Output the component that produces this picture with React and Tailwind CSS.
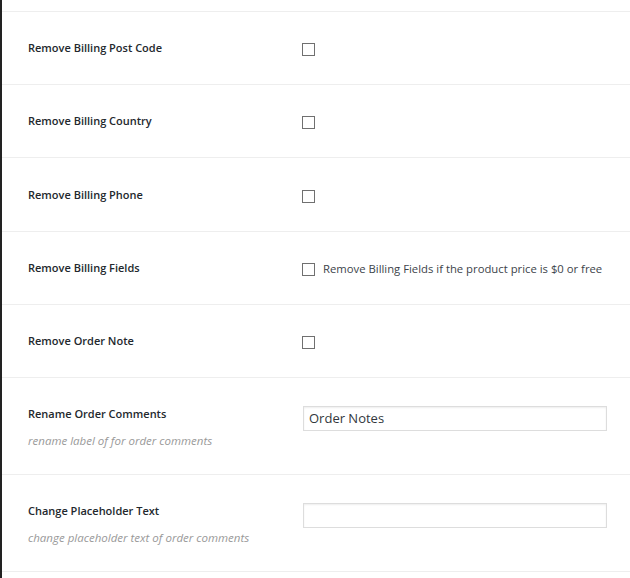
import React from "react";

const font = { fontFamily: '"Open Sans", "Noto Sans", sans-serif' };

function Checkbox() {
  return <div className="w-[13px] h-[13px] border border-[#707070] bg-white shrink-0 mt-[3px]" />;
}

function CheckRow({ label, text, h = "h-[73px]" }) {
  return (
    <div className={"flex items-center border-b border-[#eeeeee] " + h}>
      <div className="w-[300px] pl-[26px] text-[11px] font-semibold text-[#23282d] leading-[18px]">
        {label}
      </div>
      <div className="flex items-center">
        <Checkbox />
        {text && (
          <span className="ml-[8px] text-[11.3px] text-[#3c434a] leading-[18px] mt-[1px]">{text}</span>
        )}
      </div>
    </div>
  );
}

function InputRow({ label, desc, value, ptL }) {
  return (
    <div className="flex h-[97px] border-b border-[#eeeeee]">
      <div className={"w-[301px] pl-[26px] " + ptL}>
        <div className="text-[11px] font-semibold text-[#23282d] leading-[18px]">{label}</div>
        <div className="mt-[9px] text-[11.5px] italic text-[#999999] leading-[18px]">{desc}</div>
      </div>
      <div className="pt-[27px]">
        <input
          readOnly
          value={value}
          className="w-[304px] h-[25px] border border-[#dddddd] bg-white px-[5px] text-[13px] text-[#32373c] shadow-[inset_0_1px_2px_rgba(0,0,0,0.07)] outline-none"
          style={font}
        />
      </div>
    </div>
  );
}

export default function App() {
  return (
    <div className="w-[630px] h-[578px] bg-white border-l-2 border-[#222222] overflow-hidden" style={font}>
      <div className="h-[12px] border-b border-[#eeeeee]" />
      <CheckRow label="Remove Billing Post Code" />
      <CheckRow label="Remove Billing Country" />
      <CheckRow label="Remove Billing Phone" h="h-[74px]" />
      <CheckRow label="Remove Billing Fields" text="Remove Billing Fields if the product price is $0 or free" />
      <CheckRow label="Remove Order Note" />
      <InputRow label="Rename Order Comments" desc="rename label of for order comments" value="Order Notes" ptL="pt-[27px]" />
      <InputRow label="Change Placeholder Text" desc="change placeholder text of order comments" value="" ptL="pt-[27px]" />
    </div>
  );
}
